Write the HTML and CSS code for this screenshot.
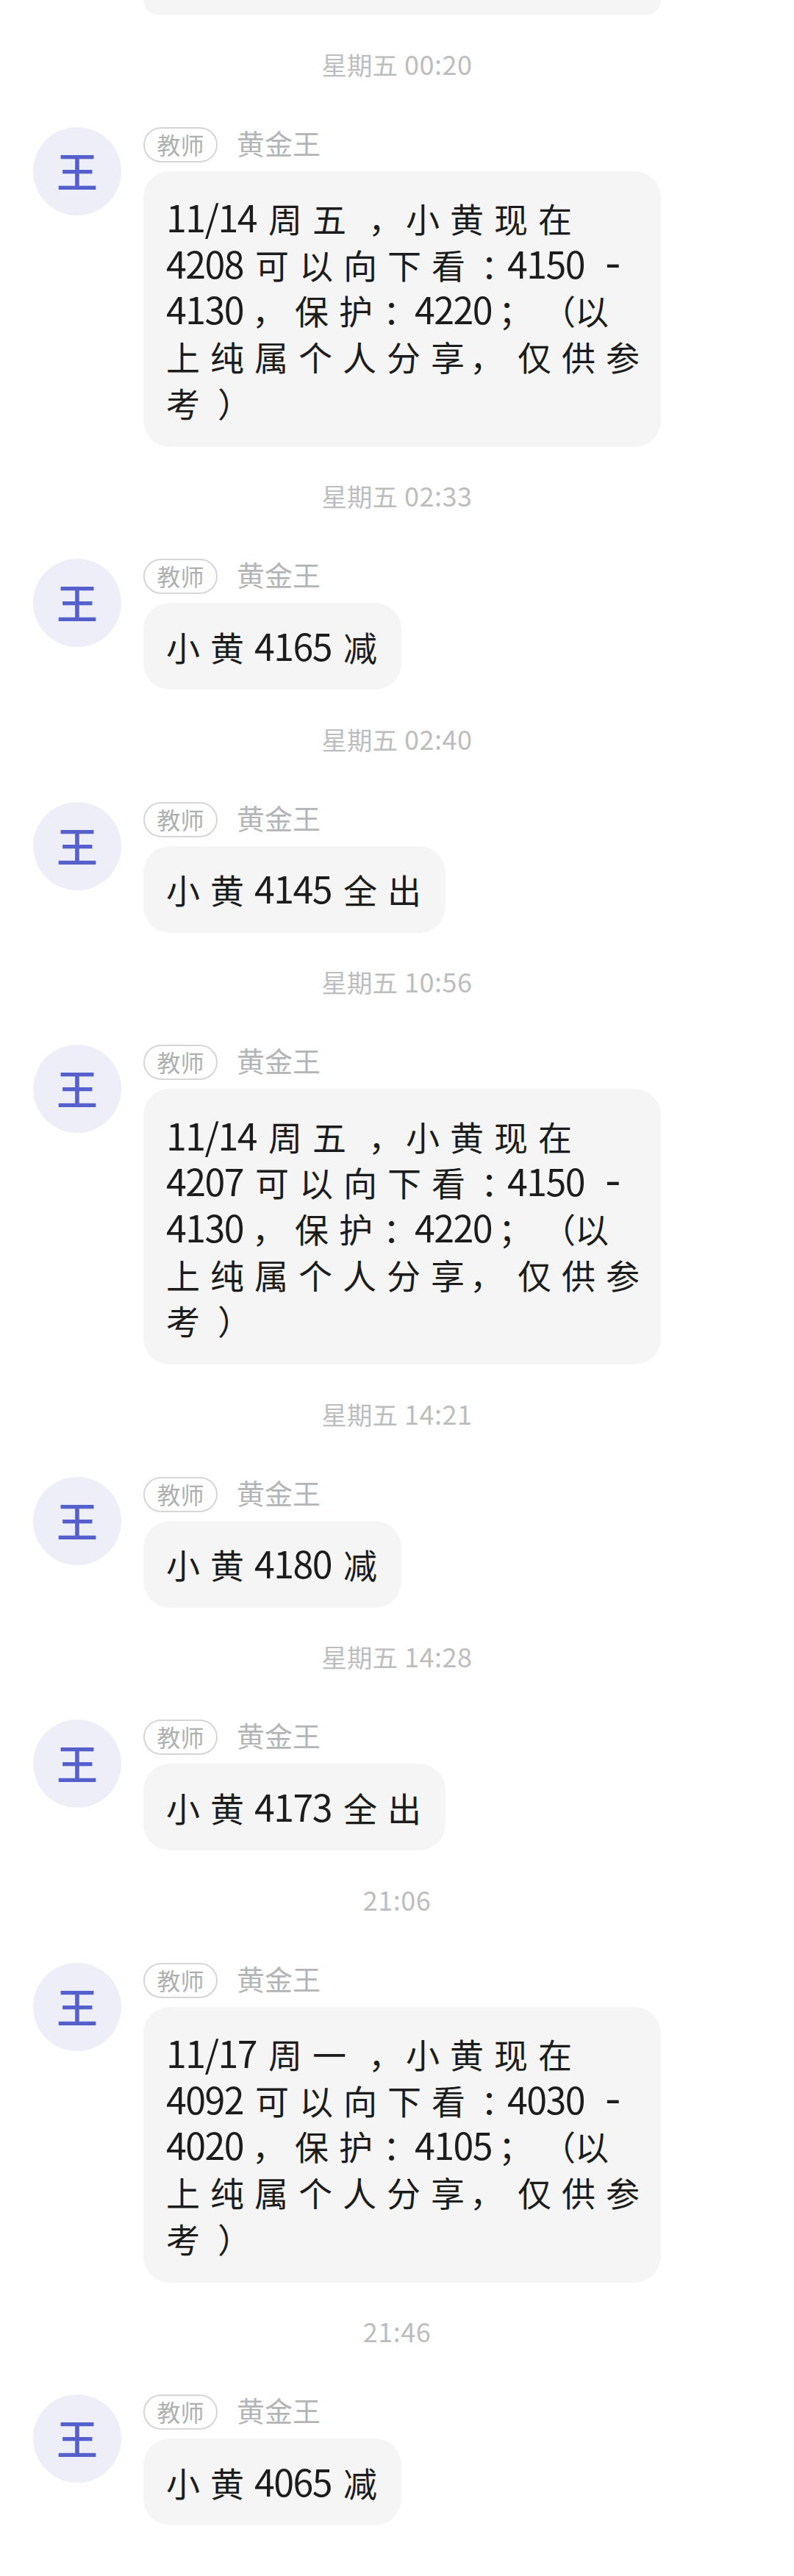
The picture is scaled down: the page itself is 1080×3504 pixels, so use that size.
FILE: index.html
```html
<!DOCTYPE html>
<html lang="zh-CN">
<head>
<meta charset="utf-8">
<title>黄金王</title>
<link rel="stylesheet" href="styles.css">
</head>
<body>
<main class="chat">
  <div class="prev"></div>

  <section class="group">
    <div class="time">星期五<span class="tn">00:20</span></div>
    <article class="msg">
      <div class="avatar">王</div>
      <div class="body">
        <header class="head"><span class="tag">教师</span><span class="name">黄金王</span></header>
        <p class="bubble long"><span class="n">11/14</span>周五<span class="cm">，</span>小黄现在<br><span class="n">4208</span>可以向下看<span class="c0">：</span><span class="n">4150</span><span class="dash">-</span><br><span class="n">4130</span><span class="c2">，</span>保护<span class="c1">：</span><span class="n">4220</span><span class="c4">；</span><span class="c3">（</span>以<br>上纯属个人分享<span class="c5">，</span>仅供参<br>考<span class="c6">）</span></p>
      </div>
    </article>
  </section>

  <section class="group">
    <div class="time">星期五<span class="tn">02:33</span></div>
    <article class="msg">
      <div class="avatar">王</div>
      <div class="body">
        <header class="head"><span class="tag">教师</span><span class="name">黄金王</span></header>
        <p class="bubble">小黄<span class="n">4165</span>减</p>
      </div>
    </article>
  </section>

  <section class="group">
    <div class="time">星期五<span class="tn">02:40</span></div>
    <article class="msg">
      <div class="avatar">王</div>
      <div class="body">
        <header class="head"><span class="tag">教师</span><span class="name">黄金王</span></header>
        <p class="bubble">小黄<span class="n">4145</span>全出</p>
      </div>
    </article>
  </section>

  <section class="group">
    <div class="time">星期五<span class="tn">10:56</span></div>
    <article class="msg">
      <div class="avatar">王</div>
      <div class="body">
        <header class="head"><span class="tag">教师</span><span class="name">黄金王</span></header>
        <p class="bubble long"><span class="n">11/14</span>周五<span class="cm">，</span>小黄现在<br><span class="n">4207</span>可以向下看<span class="c0">：</span><span class="n">4150</span><span class="dash">-</span><br><span class="n">4130</span><span class="c2">，</span>保护<span class="c1">：</span><span class="n">4220</span><span class="c4">；</span><span class="c3">（</span>以<br>上纯属个人分享<span class="c5">，</span>仅供参<br>考<span class="c6">）</span></p>
      </div>
    </article>
  </section>

  <section class="group">
    <div class="time">星期五<span class="tn">14:21</span></div>
    <article class="msg">
      <div class="avatar">王</div>
      <div class="body">
        <header class="head"><span class="tag">教师</span><span class="name">黄金王</span></header>
        <p class="bubble">小黄<span class="n">4180</span>减</p>
      </div>
    </article>
  </section>

  <section class="group">
    <div class="time">星期五<span class="tn">14:28</span></div>
    <article class="msg">
      <div class="avatar">王</div>
      <div class="body">
        <header class="head"><span class="tag">教师</span><span class="name">黄金王</span></header>
        <p class="bubble">小黄<span class="n">4173</span>全出</p>
      </div>
    </article>
  </section>

  <section class="group">
    <div class="time"><span class="tn solo">21:06</span></div>
    <article class="msg">
      <div class="avatar">王</div>
      <div class="body">
        <header class="head"><span class="tag">教师</span><span class="name">黄金王</span></header>
        <p class="bubble long"><span class="n">11/17</span>周一<span class="cm">，</span>小黄现在<br><span class="n">4092</span>可以向下看<span class="c0">：</span><span class="n">4030</span><span class="dash">-</span><br><span class="n">4020</span><span class="c2">，</span>保护<span class="c1">：</span><span class="n">4105</span><span class="c4">；</span><span class="c3">（</span>以<br>上纯属个人分享<span class="c5">，</span>仅供参<br>考<span class="c6">）</span></p>
      </div>
    </article>
  </section>

  <section class="group">
    <div class="time"><span class="tn solo">21:46</span></div>
    <article class="msg">
      <div class="avatar">王</div>
      <div class="body">
        <header class="head"><span class="tag">教师</span><span class="name">黄金王</span></header>
        <p class="bubble">小黄<span class="n">4065</span>减</p>
      </div>
    </article>
  </section>
</main>
</body>
</html>
```
FILE: styles.css
```css
* { box-sizing: border-box; }
html, body { margin: 0; padding: 0; background: #fff; }
body { width: 1080px; height: 3504px; overflow: hidden; font-family: "Noto Sans CJK SC", "Noto Sans", sans-serif; }
.chat { display: flex; flex-direction: column; }
.prev { width: 704px; height: 20px; margin-left: 195px; background: #f5f5f5; border-radius: 0 0 36px 36px; }
.group { display: flex; flex-direction: column; padding-top: 46.5px; }
.time { height: 40px; line-height: 38px; font-size: 34.5px; color: #bdbdbd; text-align: center; }
.tn { font-size: 36px; letter-spacing: 0.5px; margin-left: 9px; }
.tn.solo { margin-left: 0; }
.msg { display: flex; margin-top: 66px; padding-left: 45px; }
.avatar { flex: none; width: 120px; height: 120px; border-radius: 50%; background: #eeeef8; color: #5560cc; font-size: 56px; font-weight: 500; line-height: 116px; text-align: center; }
.body { margin-left: 30px; }
.head { display: flex; align-items: center; height: 48px; margin-bottom: 12px; }
.tag { width: 101px; height: 48px; border: 2px solid #d6d6d6; border-radius: 24px; font-size: 32px; line-height: 42px; text-align: center; color: #b0b0b0; }
.name { margin-left: 26px; font-size: 38px; line-height: 42px; height: 48px; color: #b5b5b5; }
.bubble { width: fit-content; height: 118px; margin: 0; padding: 27.5px 19px 27.5px 31px; background: #f5f5f5; border-radius: 36px; font-size: 46px; line-height: 62.7px; letter-spacing: 14px; color: #1c1c1c; white-space: nowrap; }
.bubble.long { width: 704px; height: 375px; padding-top: 32.5px; padding-bottom: 29px; }
.n { font-size: 50px; line-height: 0; letter-spacing: -1.5px; margin-right: 16px; }
.cm { padding-left: 16px; letter-spacing: 5px; }
.c0 { padding-left: 7px; letter-spacing: -10px; }
.c1 { letter-spacing: -3px; }
.c2 { margin-left: -4px; letter-spacing: 12px; }
.c3 { letter-spacing: -1px; }
.c4 { margin-left: -7px; letter-spacing: 36px; }
.c5 { margin-left: -7px; letter-spacing: 19px; }
.c6 { padding-left: 10px; }
.dash { margin-left: 12px; font-size: 62px; line-height: 0; letter-spacing: 0; }
```
